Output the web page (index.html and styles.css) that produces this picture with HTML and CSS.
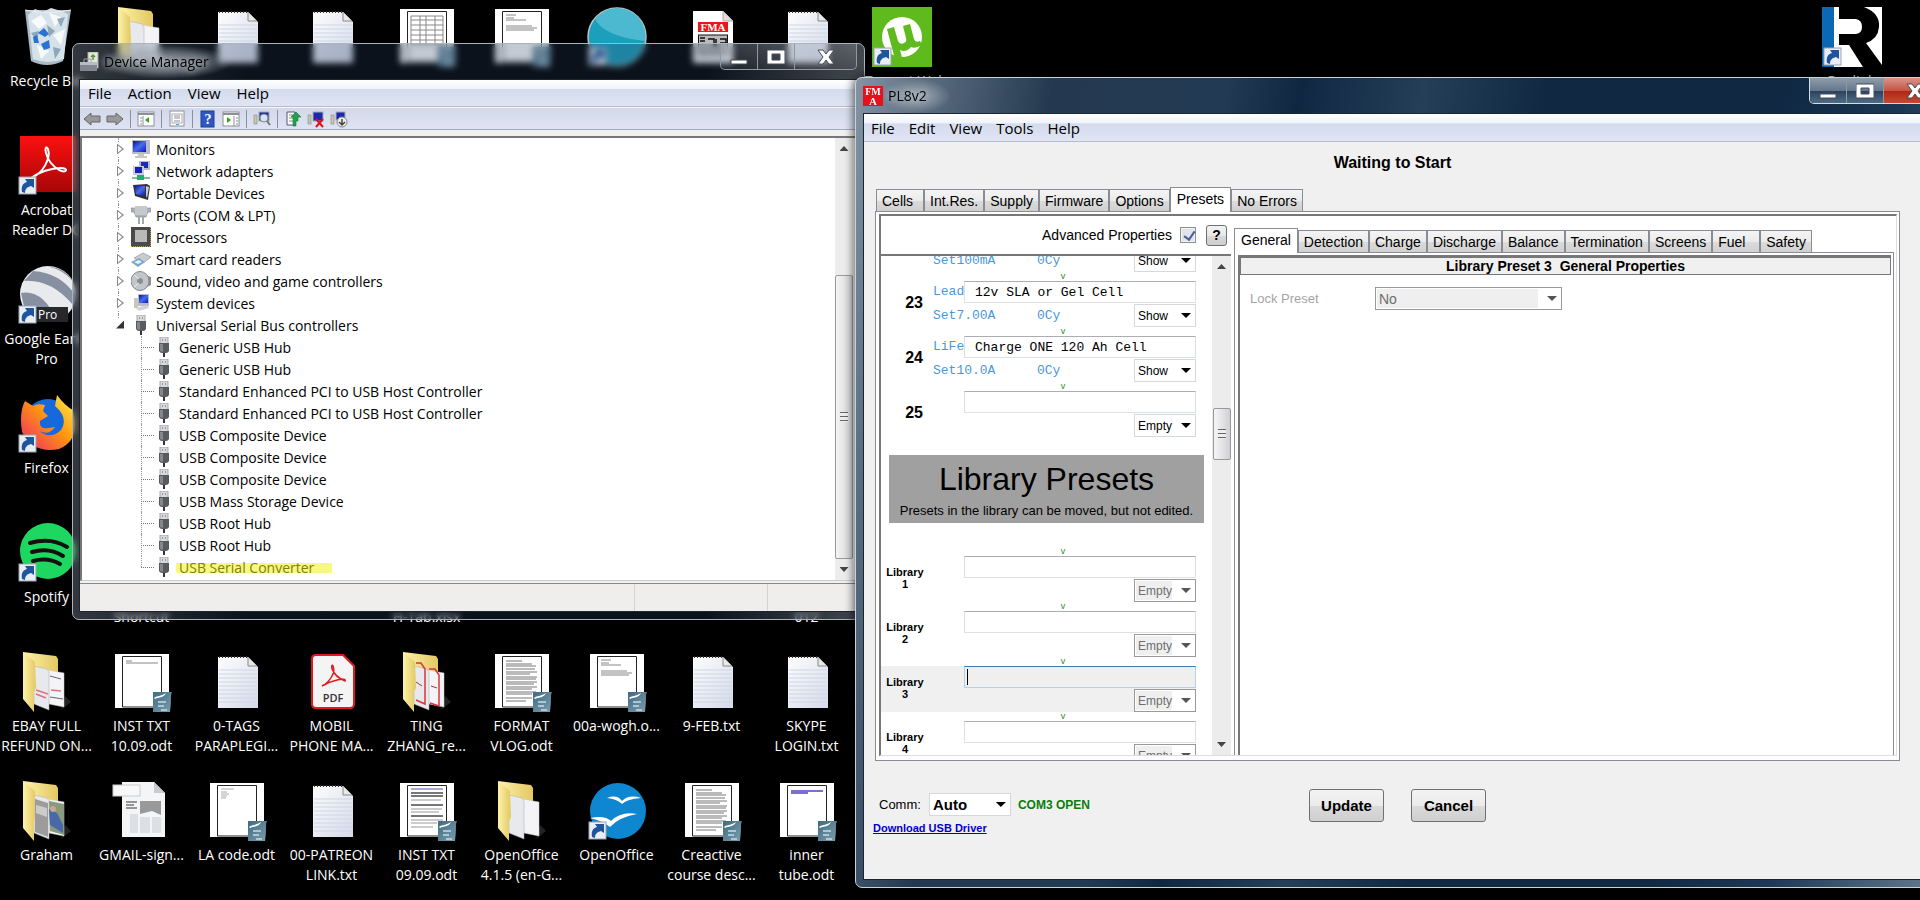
FILE: index.html
```html
<!DOCTYPE html>
<html lang="en">
<head>
    <meta charset="utf-8">
    <title>Desktop</title>
    <link rel="stylesheet" href="styles.css">
</head>
<body>
    <svg class="defs" aria-hidden="true">
        <defs>
            <linearGradient id="paper" x1="0" y1="0" x2="1" y2="1">
                <stop offset="0" stop-color="#fdfdfd"/><stop offset="1" stop-color="#d5daea"/>
            </linearGradient>
            <linearGradient id="yellow" x1="0" y1="0" x2="1" y2="0">
                <stop offset="0" stop-color="#fdf3a8"/><stop offset="1" stop-color="#e3c763"/>
            </linearGradient>
            <linearGradient id="red" x1="0" y1="0" x2="0" y2="1">
                <stop offset="0" stop-color="#fb1010"/><stop offset="1" stop-color="#a80606"/>
            </linearGradient>
            <linearGradient id="fox" x1="1" y1="0" x2="0" y2="1">
                <stop offset="0" stop-color="#fff44f"/><stop offset=".45" stop-color="#ff980e"/><stop offset="1" stop-color="#f0236b"/>
            </linearGradient>
            <linearGradient id="screen" x1="0" y1="0" x2="1" y2="1">
                <stop offset="0" stop-color="#0a1290"/><stop offset=".5" stop-color="#4a6cf0"/><stop offset="1" stop-color="#0b18b8"/>
            </linearGradient>
            <linearGradient id="badge" x1="0" y1="0" x2="1" y2="1">
                <stop offset="0" stop-color="#3f6a80"/><stop offset="1" stop-color="#7d9fb0"/>
            </linearGradient>
        </defs>

        <symbol id="shortcut" viewBox="0 0 60 60">
            <rect x="2" y="41" width="17" height="17" fill="#e9eef4" stroke="#9aa5b0"/>
            <path d="M5 56C4 50 6 47 10 46L8 43H17V52L14 50C10 51 8 53 8 57Z" fill="#1f549f"/>
        </symbol>
        <symbol id="txt" viewBox="0 0 60 60">
            <path d="M11 5H41L51 15V56H11Z" fill="url(#paper)"/>
            <path d="M12 5H41" stroke="#333" stroke-width="2" stroke-dasharray="1 2"/>
            <path d="M12 18H50M12 22H50M12 26H50M12 30H50M12 34H50M12 38H50M12 42H50M12 46H50M12 50H50" stroke="#cdd6e6"/>
            <path d="M41 5V14H50" fill="#e8e8e8" stroke="#888"/>
        </symbol>
        <symbol id="page" viewBox="0 0 60 60">
            <rect x="3" y="2" width="54" height="54" fill="#fff"/>
            <path d="M10.500 55V4.500H49.500V55Z" fill="#fff" stroke="#222"/>
        </symbol>
        <symbol id="odtbadge" viewBox="0 0 60 60">
            <path d="M41 40H60C58 44 60 46 58 60H41Z" fill="url(#badge)"/>
            <path d="M42 46C46 43 48 45 54 41C52 46 47 45 43 47Z" fill="#fff"/>
            <path d="M46 50H54M46 54H52M49 58H55" stroke="#c9dbe4" stroke-width="1.500"/>
        </symbol>
        <symbol id="odt-short" viewBox="0 0 60 60">
            <use href="#page"/><path d="M14 9H20M14 11H46" stroke="#888"/><use href="#odtbadge"/>
        </symbol>
        <symbol id="odt-full" viewBox="0 0 60 60">
            <use href="#page"/>
            <path d="M14 9H30M14 12H40M14 14H44M14 17H43M14 20H45M14 22H38M14 25H45M14 27H44M14 30H45M14 32H42M14 35H45M14 37H40M14 40H44M14 42H40M14 46H40M14 49H34" stroke="#777"/>
            <use href="#odtbadge"/>
        </symbol>
        <symbol id="odt-dark" viewBox="0 0 60 60">
            <use href="#page"/>
            <path d="M14 8H46" stroke="#55a"/>
            <path d="M14 12H46M14 15H46M14 24H46M14 35H46" stroke="#777" stroke-width="2"/>
            <path d="M14 19H44M14 28H45M14 31H42M14 39H46M14 42H40M14 46H36" stroke="#999"/>
            <use href="#odtbadge"/>
        </symbol>
        <symbol id="odt-part" viewBox="0 0 60 60">
            <use href="#page"/><path d="M14 8H24M14 11H22M14 13H34M14 19H40M14 21H45M14 23H42" stroke="#888"/><use href="#odtbadge"/>
        </symbol>
        <symbol id="odt-code" viewBox="0 0 60 60">
            <use href="#page"/><path d="M14 8H27M14 11H20M14 13H22M14 15H20M14 17H19" stroke="#aaa"/><use href="#odtbadge"/>
        </symbol>
        <symbol id="odt-link" viewBox="0 0 60 60">
            <use href="#page"/><path d="M14 10H46M14 12H31" stroke="#5040c0" stroke-width="1.500"/><use href="#odtbadge"/>
        </symbol>
        <symbol id="odt-table" viewBox="0 0 60 60">
            <use href="#page"/>
            <path d="M14 9H46M14 13H46M14 18H46M14 23H46M14 28H46M14 33H46M14 38H46M14 9V38M23 9V38M29 9V38M38 9V38M46 9V38" stroke="#888"/>
            <use href="#odtbadge"/>
        </symbol>
        <symbol id="folder" viewBox="0 0 60 60">
            <path d="M44 58L54 50L48 44Z" fill="#222"/>
            <path d="M6 0L39 4L41 7V48L18 52Z" fill="url(#yellow)"/>
            <path d="M30 18L47 21V55L32 52Z" fill="#f4f4f6" stroke="#ccc" stroke-width=".5"/>
            <path d="M17 14L30 17L32 20V58L17 52Z" fill="#e8e9ec" stroke="#aaa" stroke-width=".5"/>
            <path d="M6 0L18 10L19 36L17 40V60L6 47Z" fill="url(#yellow)"/>
        </symbol>
        <symbol id="folder-mail" viewBox="0 0 60 60">
            <use href="#folder"/>
            <path d="M19 38L31 42M34 38L44 39M19 42L29 46" stroke="#e07080" stroke-width="1.500"/>
            <path d="M33 24L44 27M33 45L46 47" stroke="#667"/>
        </symbol>
        <symbol id="folder-pdf" viewBox="0 0 60 60">
            <use href="#folder"/>
            <path d="M19 11H24L28 17V52L19 48M32 17H38L42 23V54L33 51" fill="none" stroke="#d8343c" stroke-width="1.500"/>
            <path d="M19 30L25 34M34 34L40 36" stroke="#a33"/>
        </symbol>
        <symbol id="folder-photo" viewBox="0 0 60 60">
            <use href="#folder"/>
            <path d="M32 20L47 23V54L33 50Z" fill="#8a9a7c"/>
            <path d="M32 28L40 32L46 44V52L33 44Z" fill="#4868a8"/>
            <circle cx="36" cy="28" r="3" fill="#c8a890"/>
            <path d="M18 18L31 22V56L18 51Z" fill="#9c9c9c"/>
            <path d="M19 24L30 27V36L19 32Z" fill="#ccc"/>
        </symbol>
        <symbol id="pdf" viewBox="0 0 60 60">
            <path d="M14 3H41L52 14V52Q52 56 48 56H14Q10 56 10 52V7Q10 3 14 3Z" fill="#f4f4f4" stroke="#e21a1f" stroke-width="2"/>
            <path d="M20 34C28 30 34 20 31 14C29 10 27 22 43 29C45 25 30 28 20 34Z" fill="none" stroke="#e21a1f" stroke-width="1.500"/>
            <text x="31" y="50" text-anchor="middle" font-family="Open Sans, sans-serif" font-size="11" font-weight="600" fill="#333">PDF</text>
        </symbol>
        <symbol id="news" viewBox="0 0 60 60">
            <path d="M10 1H42L53 12V56H10Z" fill="#f4f5f6"/>
            <path d="M42 1V12H53Z" fill="#c9cbd0"/>
            <rect x="1" y="4" width="27" height="11" fill="#f8f8f8" stroke="#ccc"/>
            <path d="M14 21H25M14 24H22M14 27H25" stroke="#777" stroke-width="1.500"/>
            <path d="M28 20H49V34L40 30L28 33Z" fill="#999"/>
            <path d="M18 33H26V52H18ZM28 36H38V52H28ZM40 36H49V52H40Z" fill="#dcdfe4"/>
        </symbol>
        <symbol id="bin" viewBox="0 0 60 60">
            <path d="M8 3L14 54Q30 62 46 54L54 3Z" fill="#a9bac6"/>
            <path d="M11 8L18 2L26 5L34 1L44 4L51 7L47 52Q30 58 16 52Z" fill="#d5e2ea"/>
            <path d="M14 14L24 8L30 16L22 22ZM32 6L44 10L38 20ZM36 28L48 22L44 38ZM20 38L32 44L24 52Z" fill="#f6fafc"/>
            <path d="M30 18L38 24L32 30ZM14 26L22 24L20 34ZM36 40L44 42L38 52ZM40 12L48 10L44 20Z" fill="#8fa7b8"/>
            <path d="M21 26L27 21L32 27L28 30ZM16 30L20 28L22 36L17 36ZM24 37L32 33L33 41L27 43Z" fill="#2a72d0"/>
            <path d="M8 3Q30 8 54 3" fill="none" stroke="#eee"/>
        </symbol>
        <symbol id="acrobat" viewBox="0 0 60 60">
            <rect x="3" width="56" height="56" fill="url(#red)"/>
            <path d="M14 42C26 38 34 22 31 13C27 6 26 24 42 34C50 38 52 32 44 32C34 32 22 36 14 42Z" fill="none" stroke="#fff" stroke-width="2"/>
            <use href="#shortcut"/>
        </symbol>
        <symbol id="earth" viewBox="0 0 60 60">
            <circle cx="31" cy="29" r="28" fill="#e8eaee"/>
            <path d="M7 16Q34 14 56 40L58 30Q44 8 16 6ZM4 28Q26 24 40 56Q20 58 8 46Z" fill="#8790a0"/>
            <path d="M30 1Q50 6 58 20Q52 4 30 1Z" fill="#8790a0"/>
            <rect x="19" y="42" width="32" height="15" fill="#26282c"/>
            <text x="21" y="54" font-family="Open Sans, sans-serif" font-size="12" fill="#fff">Pro</text>
            <use href="#shortcut"/>
        </symbol>
        <symbol id="firefox" viewBox="0 0 60 60">
            <circle cx="31" cy="30" r="25" fill="#1569dc"/>
            <path d="M8 7L16 12Q20 9 28 11L26 17L31 22L23 27Q22 36 32 34L38 33Q32 42 22 37Q34 46 44 36Q52 24 38 12L40 1Q48 12 56 16Q64 46 42 55Q16 60 5 38Q2 18 8 7Z" fill="url(#fox)"/>
            <use href="#shortcut"/>
        </symbol>
        <symbol id="spotify" viewBox="0 0 60 60">
            <circle cx="31" cy="28" r="28" fill="#1ed760"/>
            <path d="M13 20Q34 14 50 24M15 29Q32 24 46 33M16 38Q31 34 43 41" fill="none" stroke="#111" stroke-width="4" stroke-linecap="round"/>
            <use href="#shortcut"/>
        </symbol>
        <symbol id="ball" viewBox="0 0 60 60">
            <circle cx="30" cy="30" r="29" fill="#1b9fbd" stroke="#b9c4c6" stroke-width="1.500"/>
            <path d="M9 14Q20 30 58 34A28 28 0 0 0 9 11Z" fill="#4db9d0"/>
            <use href="#shortcut"/>
        </symbol>
        <symbol id="fma-doc" viewBox="0 0 60 60">
            <path d="M11 4H41L51 14V56H11Z" fill="#fff"/>
            <path d="M41 4V14H51" fill="#ddd" stroke="#aaa"/>
            <rect x="16" y="15" width="30" height="10" fill="#e81818"/>
            <text x="31" y="24" text-anchor="middle" font-family="Liberation Serif, serif" font-weight="bold" font-size="11" fill="#fff">FMA</text>
            <rect x="16.500" y="28" width="29" height="20" fill="#bbb" stroke="#111"/>
            <path d="M18 31H23M18 34H23M26 32H32V40M34 32V40M38 32H44V36H38" fill="none" stroke="#111" stroke-width="1.500"/>
        </symbol>
        <symbol id="utorrent" viewBox="0 0 60 60">
            <rect width="60" height="60" fill="#5fbb1d"/>
            <circle cx="30" cy="30" r="20" fill="#fff"/>
            <path d="M15 22L22 20L26 34Q28 38 32 36Q35 35 34 31L31 19L38 17L42 32Q43 36 48 34L50 38Q43 42 39 40Q34 46 28 43L31 54L24 56Z" fill="#5fbb1d"/>
            <use href="#shortcut"/>
        </symbol>
        <symbol id="rlogo" viewBox="0 0 60 60">
            <rect width="60" height="60" fill="#fff"/>
            <rect width="12" height="60" fill="#0a68b4"/>
            <path d="M17 0H42Q58 6 57 20Q56 32 44 36L60 58V60H41L27 38H17V27H34Q40 26 40 20Q40 13 34 12H17Z" fill="#000"/>
            <use href="#shortcut"/>
        </symbol>
        <symbol id="openoffice" viewBox="0 0 60 60">
            <circle cx="31" cy="30" r="28" fill="#0f86d0"/>
            <path d="M20 17Q30 13 35 20Q42 13 54 17Q40 18 35 23Q30 18 20 17ZM3 37Q18 34 24 40Q34 30 50 33Q32 36 23 46Q16 40 3 37Z" fill="#fff"/>
            <use href="#shortcut"/>
        </symbol>

        <symbol id="usb" viewBox="0 0 20 20">
            <rect x="6" y="0" width="8" height="8" fill="#d8dadd" stroke="#999" stroke-width=".8"/>
            <rect x="8" y="2" width="1" height="2" fill="#999"/><rect x="11" y="2" width="1" height="2" fill="#999"/>
            <path d="M5 6H15V14Q14 16 12 16H8Q6 16 5 14Z" fill="#585a5f"/>
            <path d="M6 7H9V15L6 14Z" fill="#85878c"/>
            <rect x="9" y="16" width="2" height="4" fill="#333"/>
        </symbol>
        <symbol id="monitor" viewBox="0 0 20 20">
            <rect x="1" y="1" width="18" height="14" fill="#b9bcc4"/><rect x="2" y="2" width="13" height="11" fill="url(#screen)"/>
            <path d="M7 15H13V17H16V19H4V17H7Z" fill="#c9c9c4"/>
        </symbol>
        <symbol id="network" viewBox="0 0 20 20">
            <rect x="8" y="0" width="11" height="9" fill="#b9bcc4"/><rect x="10" y="1" width="7" height="6" fill="#1a28c8"/>
            <rect x="2" y="5" width="11" height="9" fill="#c9ccd4"/><rect x="4" y="6" width="7" height="6" fill="#1420b0"/>
            <rect x="1" y="16" width="18" height="2" fill="#8ab8a0"/><rect x="6" y="14" width="7" height="5" fill="#1fb070"/>
        </symbol>
        <symbol id="portable" viewBox="0 0 20 20">
            <path d="M2 2L16 1L19 3L17 17L4 13Z" fill="#333"/><path d="M3 3L14 3L14 13L5 11Z" fill="url(#screen)"/>
            <path d="M15 3L18 4L16 15L15 13Z" fill="#ccc"/>
        </symbol>
        <symbol id="port" viewBox="0 0 20 20">
            <path d="M0 3H20V7H17L15 12H5L3 7H0Z" fill="#aeb1b5" stroke="#85888c" stroke-width=".6"/>
            <path d="M4 1H16V10H4Z" fill="#c6c9cc"/><path d="M7 12H9V19H7ZM11 12H13V19H11Z" fill="#a5a8ac"/>
        </symbol>
        <symbol id="cpu" viewBox="0 0 20 20">
            <rect width="20" height="20" fill="#4a4a48"/><rect x="4" y="3" width="12" height="12" fill="#b9b9b7"/>
            <path d="M0 19.500H20M19.500 0V20" stroke="#b8a050" stroke-dasharray="1 1"/>
        </symbol>
        <symbol id="card" viewBox="0 0 20 20">
            <path d="M3 9L12 4L20 8L12 14Z" fill="#c9ccd0" stroke="#888" stroke-width=".6"/><path d="M0 13L8 9L14 13L7 18Z" fill="#78a8c8"/><path d="M3 13L8 11L11 13L7 15Z" fill="#e8f0f4"/>
        </symbol>
        <symbol id="speaker" viewBox="0 0 20 20">
            <path d="M12 3L20 6V14L12 18Z" fill="#8a8c90"/><ellipse cx="9" cy="10" rx="9" ry="9.500" fill="#c3c6c9" stroke="#85888c"/><circle cx="9" cy="10" r="3" fill="#8b8e92"/><path d="M3 4L8 8M3 16L8 12" stroke="#eee"/>
        </symbol>
        <symbol id="system" viewBox="0 0 20 20">
            <rect x="3" y="5" width="4" height="10" fill="#c8c8b8"/><rect x="7" y="1" width="11" height="12" fill="#b9bcc4"/><rect x="8" y="2" width="9" height="8" fill="url(#screen)"/><path d="M5 15L16 12L18 15L8 18Z" fill="#d0d2d6"/>
        </symbol>
        <symbol id="arrow" viewBox="0 0 18 18">
            <path d="M1 9L8 3V6H17V12H8V15Z" fill="#999" stroke="#666"/>
        </symbol>
        <symbol id="pane" viewBox="0 0 18 18">
            <rect x="1" y="2" width="16" height="14" fill="#fff" stroke="#8a8f98"/><path d="M1 4H17" stroke="#8a8f98" stroke-width="2"/><path d="M6 6V16M3 8H5M3 11H5M3 14H5" stroke="#8a8f98"/><path d="M12 7V13L8 10Z" fill="#35a020"/>
        </symbol>
        <symbol id="pane-right" viewBox="0 0 18 18">
            <rect x="1" y="2" width="16" height="14" fill="#fff" stroke="#8a8f98"/><path d="M1 4H17" stroke="#8a8f98" stroke-width="2"/><path d="M12 6V16M14 8H16M14 11H16M14 14H16" stroke="#8a8f98"/><path d="M5 7V13L9 10Z" fill="#35a020"/>
        </symbol>
        <symbol id="props" viewBox="0 0 18 18">
            <rect x="2" y="1" width="14" height="15" fill="#fff" stroke="#8a8f98"/><rect x="4" y="4" width="10" height="9" fill="none" stroke="#aaa"/><path d="M6 6H12M6 8H12M6 11H12" stroke="#8a8f98"/><path d="M8 14.500H11" stroke="#40a8d8"/>
        </symbol>
        <symbol id="help" viewBox="0 0 18 18">
            <rect x="2" y="1" width="13" height="16" fill="#3058c0" stroke="#1c3c90"/>
            <text x="9" y="14" text-anchor="middle" font-family="Liberation Serif, serif" font-size="14" font-weight="bold" fill="#fff">?</text>
        </symbol>
        <symbol id="scan" viewBox="0 0 18 18">
            <rect x="1" y="5" width="3" height="9" fill="#c8c8a8" stroke="#888" stroke-width=".6"/><rect x="6" y="2" width="10" height="9" fill="#1a28b0" stroke="#aaa"/><circle cx="11" cy="8" r="4" fill="#cfe4f6" stroke="#888"/><path d="M14 11L17 15" stroke="#777" stroke-width="2"/>
        </symbol>
        <symbol id="update" viewBox="0 0 18 18">
            <path d="M3 2H11V15H3Z" fill="#fff" stroke="#557"/><path d="M5 5H9M5 8H9M5 11H9" stroke="#888"/><path d="M9 16V7H7L12 2L17 7H14V11H12V16Z" fill="#25a04c" stroke="#187838" stroke-width=".6"/>
        </symbol>
        <symbol id="uninstall" viewBox="0 0 18 18">
            <rect x="1" y="5" width="3" height="9" fill="#c8c8a8" stroke="#888" stroke-width=".6"/><rect x="6" y="2" width="10" height="9" fill="#1a28b0" stroke="#aaa"/><path d="M9 9L16 17M16 9L9 17" stroke="#d8141c" stroke-width="2"/>
        </symbol>
        <symbol id="disable" viewBox="0 0 18 18">
            <rect x="1" y="5" width="3" height="9" fill="#c8c8a8" stroke="#888" stroke-width=".6"/><rect x="6" y="2" width="9" height="8" fill="#1a28b0" stroke="#aaa"/><circle cx="12" cy="12" r="5" fill="#eee" stroke="#888"/><path d="M12 9V14M9 12L12 15L15 12" fill="none" stroke="#444" stroke-width="1.500"/>
        </symbol>
        <symbol id="min" viewBox="0 0 18 18"><path d="M1 12H17V16H1Z" fill="#fff" stroke="#444c58"/></symbol>
        <symbol id="max" viewBox="0 0 18 18"><path d="M0 2H18V16H0ZM5 6V12H13V6Z" fill="#fff" fill-rule="evenodd" stroke="#444c58"/></symbol>
        <symbol id="close" viewBox="0 0 18 18"><path d="M1 2H6L9 6L12 2H17L12 9L17 16H12L9 12L6 16H1L6 9Z" fill="#fff" stroke="#444c58"/></symbol>
    </svg>

    <div class="desktop">
        <div class="icons">
            <div class="item r0 c0"><svg><use href="#bin"/></svg><span>Recycle Bin</span></div>
            <div class="item r0 c1"><svg><use href="#folder"/></svg></div>
            <div class="item r0 c2"><svg><use href="#txt"/></svg></div>
            <div class="item r0 c3"><svg><use href="#txt"/></svg></div>
            <div class="item r0 c4"><svg><use href="#odt-table"/></svg></div>
            <div class="item r0 c5"><svg><use href="#odt-part"/></svg></div>
            <div class="item r0 c6"><svg><use href="#ball"/></svg></div>
            <div class="item r0 c7"><svg><use href="#fma-doc"/></svg></div>
            <div class="item r0 c8"><svg><use href="#txt"/></svg></div>
            <div class="item r0 c9"><svg><use href="#utorrent"/></svg><span>uTorrent Web</span></div>
            <div class="item r0 c19"><svg><use href="#rlogo"/></svg><span>Reolink</span></div>

            <div class="item r1 c0"><svg><use href="#acrobat"/></svg><span>Acrobat<br>Reader DC</span></div>
            <div class="item r2 c0"><svg><use href="#earth"/></svg><span>Google Earth<br>Pro</span></div>
            <div class="item r3 c0"><svg><use href="#firefox"/></svg><span>Firefox</span></div>
            <div class="item r4 c0"><svg><use href="#spotify"/></svg><span>Spotify</span></div>
            <div class="item r4 c1"><svg></svg><span><br>Shortcut</span></div>
            <div class="item r4 c4"><svg></svg><span><br>H-Tab.xlsx</span></div>
            <div class="item r4 c8"><svg></svg><span><br>012</span></div>

            <div class="item r5 c0"><svg><use href="#folder-mail"/></svg><span>EBAY FULL<br>REFUND ON...</span></div>
            <div class="item r5 c1"><svg><use href="#odt-short"/></svg><span>INST TXT<br>10.09.odt</span></div>
            <div class="item r5 c2"><svg><use href="#txt"/></svg><span>0-TAGS<br>PARAPLEGI...</span></div>
            <div class="item r5 c3"><svg><use href="#pdf"/></svg><span>MOBIL<br>PHONE MA...</span></div>
            <div class="item r5 c4"><svg><use href="#folder-pdf"/></svg><span>TING<br>ZHANG_re...</span></div>
            <div class="item r5 c5"><svg><use href="#odt-full"/></svg><span>FORMAT<br>VLOG.odt</span></div>
            <div class="item r5 c6"><svg><use href="#odt-part"/></svg><span>00a-wogh.o...</span></div>
            <div class="item r5 c7"><svg><use href="#txt"/></svg><span>9-FEB.txt</span></div>
            <div class="item r5 c8"><svg><use href="#txt"/></svg><span>SKYPE<br>LOGIN.txt</span></div>

            <div class="item r6 c0"><svg><use href="#folder-photo"/></svg><span>Graham</span></div>
            <div class="item r6 c1"><svg><use href="#news"/></svg><span>GMAIL-sign...</span></div>
            <div class="item r6 c2"><svg><use href="#odt-code"/></svg><span>LA code.odt</span></div>
            <div class="item r6 c3"><svg><use href="#txt"/></svg><span>00-PATREON<br>LINK.txt</span></div>
            <div class="item r6 c4"><svg><use href="#odt-dark"/></svg><span>INST TXT<br>09.09.odt</span></div>
            <div class="item r6 c5"><svg><use href="#folder"/></svg><span>OpenOffice<br>4.1.5 (en-G...</span></div>
            <div class="item r6 c6"><svg><use href="#openoffice"/></svg><span>OpenOffice</span></div>
            <div class="item r6 c7"><svg><use href="#odt-full"/></svg><span>Creactive<br>course desc...</span></div>
            <div class="item r6 c8"><svg><use href="#odt-link"/></svg><span>inner<br>tube.odt</span></div>
        </div>

        <section class="window device-manager">
            <header class="titlebar">
                <svg class="title-icon" viewBox="0 0 20 20">
                    <rect x="9" y="0" width="10" height="16" fill="#e4e8dc" stroke="#aaa"/><path d="M14 3V8M12 5L14 3L16 5" stroke="#5a9a28" fill="none" stroke-width="1.500"/>
                    <path d="M1 10H18V19H1Z" fill="#7f8890"/><path d="M1 10H18V13H1Z" fill="#b5bdc4"/><path d="M5 10V7H12V10" fill="none" stroke="#99a"/>
                </svg>
                <h1>Device Manager</h1>
                <div class="controls">
                    <button aria-label="Minimize"><svg><use href="#min"/></svg></button>
                    <button aria-label="Maximize"><svg><use href="#max"/></svg></button>
                    <button class="close" aria-label="Close"><svg><use href="#close"/></svg></button>
                </div>
            </header>
            <div class="client">
                <nav class="menu">
                    <button>File</button><button>Action</button><button>View</button><button>Help</button>
                </nav>
                <div class="toolbar">
                    <button aria-label="Back"><svg><use href="#arrow"/></svg></button>
                    <button aria-label="Forward"><svg class="flip"><use href="#arrow"/></svg></button>
                    <i></i>
                    <button aria-label="Show console tree"><svg><use href="#pane"/></svg></button>
                    <i></i>
                    <button aria-label="Properties"><svg><use href="#props"/></svg></button>
                    <i></i>
                    <button aria-label="Help"><svg><use href="#help"/></svg></button>
                    <button aria-label="Show action pane"><svg><use href="#pane-right"/></svg></button>
                    <i></i>
                    <button aria-label="Scan for hardware changes"><svg><use href="#scan"/></svg></button>
                    <i></i>
                    <button aria-label="Update driver"><svg><use href="#update"/></svg></button>
                    <button aria-label="Uninstall"><svg><use href="#uninstall"/></svg></button>
                    <button aria-label="Disable"><svg><use href="#disable"/></svg></button>
                </div>
                <div class="tree-frame">
                    <ul class="tree">
                        <li><b></b><svg><use href="#monitor"/></svg>Monitors</li>
                        <li><b></b><svg><use href="#network"/></svg>Network adapters</li>
                        <li><b></b><svg><use href="#portable"/></svg>Portable Devices</li>
                        <li><b></b><svg><use href="#port"/></svg>Ports (COM &amp; LPT)</li>
                        <li><b></b><svg><use href="#cpu"/></svg>Processors</li>
                        <li><b></b><svg><use href="#card"/></svg>Smart card readers</li>
                        <li><b></b><svg><use href="#speaker"/></svg>Sound, video and game controllers</li>
                        <li><b></b><svg><use href="#system"/></svg>System devices</li>
                        <li class="open"><b></b><svg><use href="#usb"/></svg>Universal Serial Bus controllers</li>
                        <li class="child"><svg><use href="#usb"/></svg>Generic USB Hub</li>
                        <li class="child"><svg><use href="#usb"/></svg>Generic USB Hub</li>
                        <li class="child"><svg><use href="#usb"/></svg>Standard Enhanced PCI to USB Host Controller</li>
                        <li class="child"><svg><use href="#usb"/></svg>Standard Enhanced PCI to USB Host Controller</li>
                        <li class="child"><svg><use href="#usb"/></svg>USB Composite Device</li>
                        <li class="child"><svg><use href="#usb"/></svg>USB Composite Device</li>
                        <li class="child"><svg><use href="#usb"/></svg>USB Composite Device</li>
                        <li class="child"><svg><use href="#usb"/></svg>USB Mass Storage Device</li>
                        <li class="child"><svg><use href="#usb"/></svg>USB Root Hub</li>
                        <li class="child"><svg><use href="#usb"/></svg>USB Root Hub</li>
                        <li class="child last"><svg><use href="#usb"/></svg><mark>USB Serial Converter</mark></li>
                    </ul>
                    <div class="scrollbar">
                        <span class="up"></span>
                        <span class="thumb"></span>
                        <span class="down"></span>
                    </div>
                </div>
                <footer class="statusbar"><span></span><span></span><span></span></footer>
            </div>
        </section>

        <section class="window pl8">
            <header class="titlebar">
                <svg class="title-icon" viewBox="0 0 20 20">
                    <rect width="20" height="20" fill="#e8101a"/>
                    <text x="10" y="9" text-anchor="middle" font-family="Liberation Serif, serif" font-size="10" font-weight="bold" fill="#fff">FM</text>
                    <text x="10" y="19" text-anchor="middle" font-family="Liberation Serif, serif" font-size="11" font-weight="bold" fill="#fff">A</text>
                </svg>
                <h1>PL8v2</h1>
                <div class="controls">
                    <button aria-label="Minimize"><svg><use href="#min"/></svg></button>
                    <button aria-label="Maximize"><svg><use href="#max"/></svg></button>
                    <button class="close" aria-label="Close"><svg><use href="#close"/></svg></button>
                </div>
            </header>
            <div class="client">
                <nav class="menu">
                    <button>File</button><button>Edit</button><button>View</button><button>Tools</button><button>Help</button>
                </nav>
                <h2>Waiting to Start</h2>
                <div class="tabs">
                    <button>Cells</button><button>Int.Res.</button><button>Supply</button><button>Firmware</button><button>Options</button><button class="active">Presets</button><button>No Errors</button>
                </div>
                <div class="panel">
                    <div class="panel-inner">
                        <div class="left">
                            <div class="advanced">
                                <label for="adv">Advanced Properties</label>
                                <input type="checkbox" id="adv" checked>
                                <button>?</button>
                            </div>
                            <div class="list-frame">
                                <div class="list">
                                    <div class="preset first">
                                        <div class="arrow">v</div>
                                        <div class="preset-main">
                                            <span class="number">22</span>
                                            <div class="fields">
                                                <span class="chem"></span><input type="text" aria-label="Preset 22 name">
                                                <span class="set">Set100mA</span><span class="cycles">0Cy</span>
                                                <span class="select"><select aria-label="Preset 22"><option>Show</option></select></span>
                                            </div>
                                        </div>
                                    </div>
                                    <div class="preset">
                                        <div class="arrow">v</div>
                                        <div class="preset-main">
                                            <span class="number">23</span>
                                            <div class="fields">
                                                <span class="chem">Lead</span><input type="text" aria-label="Preset 23 name" value="12v SLA or Gel Cell">
                                                <span class="set">Set7.00A</span><span class="cycles">0Cy</span>
                                                <span class="select"><select aria-label="Preset 23"><option>Show</option></select></span>
                                            </div>
                                        </div>
                                    </div>
                                    <div class="preset">
                                        <div class="arrow">v</div>
                                        <div class="preset-main">
                                            <span class="number">24</span>
                                            <div class="fields">
                                                <span class="chem">LiFe</span><input type="text" aria-label="Preset 24 name" value="Charge ONE 120 Ah Cell">
                                                <span class="set">Set10.0A</span><span class="cycles">0Cy</span>
                                                <span class="select"><select aria-label="Preset 24"><option>Show</option></select></span>
                                            </div>
                                        </div>
                                    </div>
                                    <div class="preset">
                                        <div class="arrow">v</div>
                                        <div class="preset-main">
                                            <span class="number">25</span>
                                            <div class="fields">
                                                <span class="chem"></span><input type="text" aria-label="Preset 25 name">
                                                <span class="set"></span><span class="cycles"></span>
                                                <span class="select"><select aria-label="Preset 25"><option>Empty</option></select></span>
                                            </div>
                                        </div>
                                    </div>
                                    <div class="banner">
                                        <h3>Library Presets</h3>
                                        <p>Presets in the library can be moved, but not edited.</p>
                                    </div>
                                    <div class="preset">
                                        <div class="arrow">v</div>
                                        <div class="preset-main">
                                            <span class="library">Library<br>1</span>
                                            <div class="fields">
                                                <span class="chem"></span><input type="text" aria-label="Library 1 name">
                                                <span class="set"></span><span class="cycles"></span>
                                                <span class="select"><select aria-label="Library 1" disabled><option>Empty</option></select></span>
                                            </div>
                                        </div>
                                    </div>
                                    <div class="preset">
                                        <div class="arrow">v</div>
                                        <div class="preset-main">
                                            <span class="library">Library<br>2</span>
                                            <div class="fields">
                                                <span class="chem"></span><input type="text" aria-label="Library 2 name">
                                                <span class="set"></span><span class="cycles"></span>
                                                <span class="select"><select aria-label="Library 2" disabled><option>Empty</option></select></span>
                                            </div>
                                        </div>
                                    </div>
                                    <div class="preset">
                                        <div class="arrow">v</div>
                                        <div class="preset-main selected">
                                            <span class="library">Library<br>3</span>
                                            <div class="fields">
                                                <span class="chem"></span><input type="text" aria-label="Library 3 name">
                                                <span class="set"></span><span class="cycles"></span>
                                                <span class="select"><select aria-label="Library 3" disabled><option>Empty</option></select></span>
                                            </div>
                                        </div>
                                    </div>
                                    <div class="preset">
                                        <div class="arrow">v</div>
                                        <div class="preset-main">
                                            <span class="library">Library<br>4</span>
                                            <div class="fields">
                                                <span class="chem"></span><input type="text" aria-label="Library 4 name">
                                                <span class="set"></span><span class="cycles"></span>
                                                <span class="select"><select aria-label="Library 4" disabled><option>Empty</option></select></span>
                                            </div>
                                        </div>
                                    </div>
                                </div>
                                <div class="scrollbar">
                                    <span class="up"></span>
                                    <span class="thumb"></span>
                                    <span class="down"></span>
                                </div>
                            </div>
                        </div>
                        <div class="right">
                            <div class="tabs">
                                <button class="active">General</button><button>Detection</button><button>Charge</button><button>Discharge</button><button>Balance</button><button>Termination</button><button>Screens</button><button>Fuel</button><button>Safety</button>
                            </div>
                            <div class="props">
                                <div class="props-inner">
                                    <h3>Library Preset 3&nbsp; General Properties</h3>
                                    <div class="prop">
                                        <label for="lock">Lock Preset</label>
                                        <span class="select wide"><select id="lock" disabled><option>No</option></select></span>
                                    </div>
                                </div>
                            </div>
                        </div>
                    </div>
                </div>
                <footer class="bottom">
                    <div class="comm">
                        <div class="comm-row">
                            <label for="comm">Comm:</label>
                            <span class="select port"><select id="comm"><option>Auto</option></select></span>
                            <strong>COM3 OPEN</strong>
                        </div>
                        <a href="#driver">Download USB Driver</a>
                    </div>
                    <button>Update</button>
                    <button>Cancel</button>
                </footer>
            </div>
        </section>
    </div>
</body>
</html>
```
FILE: styles.css
```css
* {
    box-sizing: border-box;
}

body {
    margin: 0;
    background: #000;
    font-family: "Open Sans", "Noto Sans", sans-serif;
    font-size: 14px;
}

button, input, select {
    font: inherit;
    color: inherit;
    margin: 0;
}

h1, h2, h3, p, ul {
    margin: 0;
    padding: 0;
}

.defs {
    position: absolute;
    width: 0;
    height: 0;
}

.desktop {
    position: relative;
    height: 100vh;
    overflow: hidden;
}

/* desktop icons */
.icons {
    display: grid;
    grid-template-columns: repeat(20, 95px);
    grid-template-rows: repeat(7, 129px);
    margin-left: -1px;
}

.item {
    display: flex;
    flex-direction: column;
    align-items: center;
    padding-top: 7px;
    color: #fff;
    line-height: 20px;
    text-align: center;
    white-space: nowrap;
}

.item svg {
    width: 60px;
    height: 60px;
    margin-bottom: 4px;
    flex: none;
}

.r0 { grid-row: 1; }
.r1 { grid-row: 2; }
.r2 { grid-row: 3; }
.r3 { grid-row: 4; }
.r4 { grid-row: 5; }
.r5 { grid-row: 6; }
.r6 { grid-row: 7; }
.c0 { grid-column: 1; }
.c1 { grid-column: 2; }
.c2 { grid-column: 3; }
.c3 { grid-column: 4; }
.c4 { grid-column: 5; }
.c5 { grid-column: 6; }
.c6 { grid-column: 7; }
.c7 { grid-column: 8; }
.c8 { grid-column: 9; }
.c9 { grid-column: 10; }
.c19 { grid-column: 20; }

/* windows */
.window {
    position: absolute;
    display: flex;
    flex-direction: column;
    padding: 0 7px 7px;
    border: 1px solid #aab4be;
    border-radius: 7px;
    backdrop-filter: blur(3px);
}

.device-manager {
    left: 72px;
    top: 43px;
    width: 793px;
    height: 577px;
    padding-left: 6px;
    background: linear-gradient(90deg, rgba(130, 140, 155, 0.4), rgba(40, 65, 100, 0.28) 22%, rgba(40, 65, 100, 0.28) 80%, rgba(150, 160, 175, 0.45));
}

.pl8 {
    left: 855px;
    top: 77px;
    right: -34px;
    bottom: 12px;
    border-color: #c5d3df;
    background: linear-gradient(100deg, #8494a4, #5a6c80 6%, #24394f 16%, #233a54 30%, #102742 36%, #253f58 46%, #102842 56%, #102842 75%, #1c3854 85%, #6c8096);
    box-shadow: 0 0 8px 2px rgba(0, 0, 0, 0.6);
}

.titlebar {
    display: flex;
    align-items: center;
    height: 35px;
    flex: none;
}

.title-icon {
    position: relative;
    z-index: 1;
    width: 20px;
    height: 20px;
}

.titlebar h1 {
    padding: 5px 24px 5px 5px;
    font-size: 14px;
    font-weight: normal;
    line-height: 24px;
    color: #000;
    background: radial-gradient(closest-side, rgba(185, 194, 202, 0.75), rgba(150, 160, 170, 0.5) 60%, transparent);
    text-shadow: 0 0 6px #b5bcc4, 0 0 10px #a5adb5;
}

.controls {
    display: flex;
    align-self: flex-start;
    height: 26px;
    margin-left: auto;
    border: 1px solid #8d98a3;
    border-top: 0;
    border-radius: 0 0 5px 5px;
    overflow: hidden;
}

.controls button {
    width: 37px;
    padding: 0;
    border: 0;
    border-right: 1px solid #8d98a3;
    background: linear-gradient(rgba(255, 255, 255, 0.15), rgba(255, 255, 255, 0.05));
}

.controls .close {
    width: 61px;
    border-right: 0;
}

.controls svg {
    display: block;
    width: 18px;
    height: 18px;
    margin: 0 auto;
}

.pl8 .controls {
    border-color: #d5dde5;
}

.pl8 .controls button {
    background: linear-gradient(#8e9dac, #64778b 50%, #2a425c 52%, #536c86);
}

.pl8 .controls .close {
    background: linear-gradient(#d99588, #c65443 50%, #b02516 52%, #c84830);
}

.client {
    flex: 1;
    min-height: 0;
    display: flex;
    flex-direction: column;
    border: 1px solid #1c2630;
    background: #f0f0f0;
}

.menu {
    display: flex;
    height: 27px;
    flex: none;
    border-bottom: 1px solid #b6bccc;
    font-size: 15px;
    background: linear-gradient(#fff, #f0f3fa 34%, #d4dbed 36%, #e0e5f4);
}

.menu button {
    padding: 0 8px;
    border: 0;
    background: none;
}

.pl8 .menu {
    height: 28px;
}

.pl8 .menu button {
    padding: 0 7px;
}

.toolbar {
    display: flex;
    align-items: center;
    height: 23px;
    flex: none;
    border-top: 1px solid #f8f8fc;
    border-bottom: 1px solid #a5abba;
    background: linear-gradient(#d3d9ea, #dfe3f3);
}

.toolbar button {
    width: 23px;
    height: 20px;
    padding: 0;
    border: 0;
    background: none;
}

.toolbar svg {
    display: block;
    width: 18px;
    height: 18px;
    margin: 0 auto;
}

.toolbar .flip {
    transform: scaleX(-1);
}

.toolbar i {
    width: 1px;
    height: 18px;
    margin: 0 3px 0 4px;
    background: #8a90a0;
}

/* device tree */
.tree-frame {
    display: flex;
    flex: 1;
    min-height: 0;
    margin-top: 6px;
    border: 2px solid #777;
    border-right: 0;
    border-bottom: 1px solid #ccc;
    background: #fff;
}

.tree {
    flex: 1;
    list-style: none;
    overflow: hidden;
}

.tree li {
    position: relative;
    display: flex;
    align-items: center;
    height: 22px;
    padding-left: 34px;
    white-space: nowrap;
}

.tree li::before {
    content: "";
    position: absolute;
    left: 36px;
    top: 0;
    height: 22px;
    border-left: 1px dotted #999;
}

.tree svg {
    width: 20px;
    height: 20px;
    margin-right: 5px;
}

.tree b {
    position: relative;
    width: 15px;
    height: 13px;
    background: linear-gradient(90deg, #fff 10px, transparent 10px);
}

/* hollow triangle: a white one on top of a grey one */
.tree b::before, .tree b::after {
    content: "";
    position: absolute;
    left: 1px;
    top: 1px;
    width: 7px;
    height: 11px;
    background: #8a8a8a;
    clip-path: polygon(0 0, 100% 50%, 0 100%);
}

.tree b::after {
    left: 2px;
    top: 3px;
    width: 4px;
    height: 7px;
    background: #fff;
}

.tree .open b::before {
    left: 0;
    top: 2px;
    width: 8px;
    height: 8px;
    background: #333;
    clip-path: polygon(100% 0, 100% 100%, 0 100%);
}

.tree .open b::after {
    display: none;
}

.tree .open::before {
    height: 6px;
}

.tree .child {
    padding-left: 72px;
}

.tree .child::before {
    left: 59px;
}

.tree .child::after {
    content: "";
    position: absolute;
    left: 59px;
    top: 11px;
    width: 13px;
    border-top: 1px dotted #777;
}

.tree .last::before {
    height: 11px;
}

mark {
    padding: 0 18px 0 3px;
    margin-left: -3px;
    border-radius: 6px;
    color: #808010;
    background: linear-gradient(transparent 5px, #f8f880 5px, #f8f880 15px, transparent 15px);
}

.scrollbar {
    display: flex;
    flex-direction: column;
    align-items: center;
    width: 18px;
    background: #ececec;
}

.scrollbar .up, .scrollbar .down {
    width: 9px;
    height: 5px;
    margin: 8px 0;
    background: #444;
}

.scrollbar .up {
    clip-path: polygon(50% 0, 100% 100%, 0 100%);
}

.scrollbar .down {
    margin-top: auto;
    clip-path: polygon(0 0, 100% 0, 50% 100%);
}

.scrollbar .thumb {
    display: flex;
    align-items: center;
    justify-content: center;
    width: 18px;
    border: 1px solid #999;
    border-radius: 2px;
    background: linear-gradient(90deg, #f5f5f5, #e4e4e6 50%, #cfd0d4);
}

.scrollbar .thumb::before {
    content: "";
    width: 8px;
    height: 10px;
    background: repeating-linear-gradient(#666 0 1px, #eee 1px 4px);
}

.device-manager .scrollbar {
    margin-right: 3px;
}

.device-manager .thumb {
    height: 284px;
    margin-top: 116px;
}

.statusbar {
    display: grid;
    grid-template-columns: 1fr 133px 88px;
    height: 28px;
    flex: none;
    margin-top: 2px;
    border-top: 1px solid #888;
    background: #f0eded;
}

.statusbar span {
    border-right: 1px solid #d5d2d2;
}

/* PL8 window */
.pl8 .client {
    font-family: "Liberation Sans", Arial, sans-serif;
}

.pl8 .menu {
    font-family: "Open Sans", "Noto Sans", sans-serif;
}

.pl8 h2 {
    height: 45px;
    flex: none;
    padding-right: 24px;
    font-size: 16px;
    line-height: 42px;
    text-align: center;
}

.tabs {
    display: flex;
    align-items: flex-end;
    height: 24px;
    flex: none;
}

.pl8 .client > .tabs {
    padding-left: 12px;
}

.tabs button {
    height: 22px;
    min-width: 48px;
    padding: 0 5px;
    border: 1px solid #898c95;
    border-bottom: 0;
    text-align: left;
    line-height: 20px;
    background: linear-gradient(#f4f4f4, #ebebeb 50%, #dbdbdb 52%, #d0d0d0);
}

.tabs .active {
    position: relative;
    height: 25px;
    margin-bottom: -1px;
    padding: 0 6px 2px;
    background: #fff;
}

.panel {
    flex: 1;
    min-height: 0;
    display: flex;
    margin: 0 45px 0 11px;
    padding: 2px 2px 4px 3px;
    border: 1px solid #898c95;
    background: #fff;
}

.panel-inner {
    flex: 1;
    display: flex;
    border: 1px solid #ddd;
    border-top: 2px solid #777;
    border-left: 2px solid #777;
}

.left {
    display: flex;
    flex-direction: column;
    width: 350px;
}

.advanced {
    display: flex;
    align-items: center;
    justify-content: flex-end;
    height: 38px;
    padding-right: 4px;
    flex: none;
}

.advanced input {
    appearance: none;
    width: 16px;
    height: 16px;
    margin: 0 10px 0 8px;
    border: 1px solid #8e8f8f;
    background: #dfe3ea;
    box-shadow: inset 0 0 0 1px #f4f4f4;
}

.advanced input:checked::before {
    content: "";
    display: block;
    width: 5px;
    height: 9px;
    margin: 1px 0 0 5px;
    border: solid #4a5f97;
    border-width: 0 2px 2px 0;
    transform: rotate(35deg);
}

.advanced button {
    width: 21px;
    height: 21px;
    padding: 0;
    border: 1px solid #707070;
    border-radius: 3px;
    font-weight: bold;
    background: linear-gradient(#f3f3f3, #e8e8e8 50%, #d8d8d8 52%, #cfcfcf);
}

.list-frame {
    flex: 1;
    min-height: 0;
    display: flex;
    border-top: 2px solid #777;
}

.list-frame .scrollbar {
    width: 19px;
}

.list-frame .thumb {
    height: 52px;
    margin-top: 131px;
}

.list {
    flex: 1;
    overflow: hidden;
}

/* the list is scrolled part way down */
.first {
    margin-top: -39px;
}

.arrow {
    height: 9px;
    padding-left: 33px;
    font-size: 9px;
    line-height: 9px;
    text-align: center;
    color: #2c8a2c;
}

.preset-main {
    display: flex;
    height: 46px;
    margin-right: 16px;
}

.number {
    width: 48px;
    padding-right: 6px;
    font-size: 16px;
    font-weight: bold;
    line-height: 44px;
    text-align: right;
}

.library {
    width: 48px;
    padding-top: 10px;
    font-size: 11px;
    font-weight: bold;
    line-height: 12px;
    text-align: center;
}

.fields {
    flex: 1;
    display: grid;
    grid-template-columns: 31px 73px 1fr 62px;
    grid-template-rows: 22px 23px;
    row-gap: 1px;
    padding-left: 4px;
    font-family: "Liberation Mono", "Courier New", monospace;
    font-size: 13px;
    color: #4b97dc;
}

.chem {
    line-height: 22px;
}

.fields input {
    grid-column: 2 / 5;
    width: 100%;
    height: 22px;
    padding: 0 10px;
    border: 1px solid #dcdfe4;
    border-top-color: #abadb3;
    color: #000;
    background: #fff;
}

.set {
    grid-column: 1 / 3;
    line-height: 24px;
}

.cycles {
    line-height: 24px;
}

.selected {
    background: #f0f0f0;
}

.selected .fields {
    position: relative;
}

/* text caret */
.selected .fields::after {
    content: "";
    position: absolute;
    left: 38px;
    top: 3px;
    width: 1px;
    height: 16px;
    background: #000;
}

.selected .fields input {
    border-color: #b5cfe7;
    border-top-color: #3d7bad;
    background: #efefef;
}

.select {
    position: relative;
    display: block;
    font-family: "Liberation Sans", Arial, sans-serif;
    font-size: 12px;
    color: #000;
}

.select select {
    appearance: none;
    display: block;
    width: 100%;
    height: 23px;
    padding: 0 20px 0 3px;
    border: 1px solid #d5d8dd;
    border-radius: 0;
    background: #fff;
}

.select select:disabled {
    opacity: 1;
    color: #6d6d6d;
    border-color: #999;
    background: linear-gradient(#efefef, #efefef) 1px 1px / calc(100% - 24px) calc(100% - 2px) no-repeat #fff;
}

.select::after {
    content: "";
    position: absolute;
    right: 5px;
    top: 9px;
    width: 10px;
    height: 5px;
    background: #000;
    clip-path: polygon(0 0, 100% 0, 50% 100%);
}

.select:has(:disabled)::after {
    background: #555;
}

.banner {
    height: 68px;
    margin: 18px 8px 24px;
    text-align: center;
    background: #a0a0a0;
}

.banner h3 {
    font-size: 32px;
    font-weight: normal;
    line-height: 48px;
}

.banner p {
    font-size: 13px;
    line-height: 16px;
    white-space: nowrap;
}

.right {
    flex: 1;
    display: flex;
    flex-direction: column;
    margin: 12px 2px 0 3px;
}

.props {
    flex: 1;
    padding: 2px 2px 0 3px;
    border: 1px solid #898c95;
    border-bottom: 0;
    display: flex;
}

.props-inner {
    flex: 1;
    border-top: 2px solid #777;
    border-left: 2px solid #777;
}

.props h3 {
    height: 18px;
    border: 1px solid #777;
    font-size: 14px;
    line-height: 16px;
    text-align: center;
    background: #f0f0f0;
}

.prop {
    display: flex;
    align-items: center;
    padding: 12px 10px;
    font-size: 13px;
    color: #a5a5a5;
}

.prop label {
    width: 125px;
}

.wide {
    width: 187px;
    font-size: 14px;
}

.bottom {
    display: flex;
    height: 118px;
    flex: none;
    padding: 28px 9px 0;
}

.comm {
    width: 436px;
}

.comm-row {
    display: flex;
    align-items: center;
    height: 31px;
    padding-left: 6px;
    font-size: 13px;
}

.port {
    width: 82px;
    margin: 0 7px 0 8px;
    font-size: 15px;
    font-weight: bold;
}

.comm strong {
    font-size: 12px;
    color: #0a7d0a;
}

.comm a {
    display: block;
    font-size: 11px;
    font-weight: bold;
    line-height: 16px;
    color: #0000d0;
}

.bottom > button {
    width: 75px;
    height: 33px;
    margin-right: 27px;
    padding: 0;
    border: 1px solid #707070;
    border-radius: 3px;
    font-size: 15px;
    font-weight: bold;
    background: linear-gradient(#f3f3f3, #ebebeb 50%, #dadada 52%, #cfcfcf);
}
```
